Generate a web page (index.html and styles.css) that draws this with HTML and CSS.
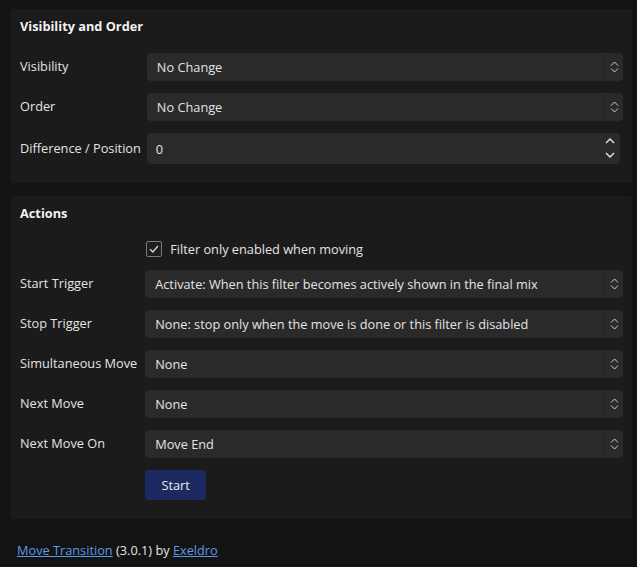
FILE: index.html
```html
<!DOCTYPE html>
<html>
<head>
<meta charset="utf-8">
<link rel="stylesheet" href="styles.css">
</head>
<body>
<section class="panel">
  <h2 class="panel-title">Visibility and Order</h2>
  <div class="form">
    <div class="label">Visibility</div>
    <div class="select"><span class="value">No Change</span><span class="arrows"><svg width="9" height="14" viewBox="0 0 9 14"><path d="M1 5.5 L4.5 2 L8 5.5 M1 8.5 L4.5 12 L8 8.5" fill="none" stroke="#cfcfcf" stroke-width="1"/></svg></span></div>
    <div class="label">Order</div>
    <div class="select"><span class="value">No Change</span><span class="arrows"><svg width="9" height="14" viewBox="0 0 9 14"><path d="M1 5.5 L4.5 2 L8 5.5 M1 8.5 L4.5 12 L8 8.5" fill="none" stroke="#cfcfcf" stroke-width="1"/></svg></span></div>
    <div class="label">Difference / Position</div>
    <div class="spin"><span class="value">0</span><span class="spin-arrows"><svg width="10" height="24" viewBox="0 0 10 24"><path d="M1 6 L5 2 L9 6 M1 16 L5 20 L9 16" fill="none" stroke="#e6e6e6" stroke-width="1.4"/></svg></span></div>
  </div>
</section>

<section class="panel">
  <h2 class="panel-title">Actions</h2>
  <div class="form form-actions">
    <div class="label"></div>
    <label class="check"><span class="box"><svg width="12" height="12" viewBox="0 0 12 12"><path d="M2 6.2 L4.8 9 L10 3" fill="none" stroke="#d8d8d8" stroke-width="1.3"/></svg></span>Filter only enabled when moving</label>
    <div class="label">Start Trigger</div>
    <div class="select"><span class="value">Activate: When this filter becomes actively shown in the final mix</span><span class="arrows"><svg width="9" height="14" viewBox="0 0 9 14"><path d="M1 5.5 L4.5 2 L8 5.5 M1 8.5 L4.5 12 L8 8.5" fill="none" stroke="#cfcfcf" stroke-width="1"/></svg></span></div>
    <div class="label">Stop Trigger</div>
    <div class="select"><span class="value">None: stop only when the move is done or this filter is disabled</span><span class="arrows"><svg width="9" height="14" viewBox="0 0 9 14"><path d="M1 5.5 L4.5 2 L8 5.5 M1 8.5 L4.5 12 L8 8.5" fill="none" stroke="#cfcfcf" stroke-width="1"/></svg></span></div>
    <div class="label">Simultaneous Move</div>
    <div class="select"><span class="value">None</span><span class="arrows"><svg width="9" height="14" viewBox="0 0 9 14"><path d="M1 5.5 L4.5 2 L8 5.5 M1 8.5 L4.5 12 L8 8.5" fill="none" stroke="#cfcfcf" stroke-width="1"/></svg></span></div>
    <div class="label">Next Move</div>
    <div class="select"><span class="value">None</span><span class="arrows"><svg width="9" height="14" viewBox="0 0 9 14"><path d="M1 5.5 L4.5 2 L8 5.5 M1 8.5 L4.5 12 L8 8.5" fill="none" stroke="#cfcfcf" stroke-width="1"/></svg></span></div>
    <div class="label">Next Move On</div>
    <div class="select"><span class="value">Move End</span><span class="arrows"><svg width="9" height="14" viewBox="0 0 9 14"><path d="M1 5.5 L4.5 2 L8 5.5 M1 8.5 L4.5 12 L8 8.5" fill="none" stroke="#cfcfcf" stroke-width="1"/></svg></span></div>
    <div class="label"></div>
    <div><button class="btn">Start</button></div>
  </div>
</section>

<footer class="footer"><a href="#">Move Transition</a> (3.0.1) by <a href="#">Exeldro</a></footer>
</body>
</html>
```

FILE: styles.css
```css
html, body {
  background: #131313;
}
body {
  margin: 9px 5px 0 11px;
  font-family: "Open Sans", "Liberation Sans", sans-serif;
  font-size: 12.75px;
  color: #e4e4e4;
}
.panel {
  background: #1b1b1b;
  border-radius: 4px;
  padding: 8px 9px 19px 9px;
  margin-bottom: 13px;
}
.panel-title {
  margin: 0 0 18px 0;
  font-size: 12.75px;
  line-height: 18px;
  font-weight: 700;
  color: #f2f2f2;
}
.form {
  display: grid;
  grid-template-columns: auto 1fr;
  column-gap: 6px;
  row-gap: 12px;
  align-items: center;
}
.form-actions {
  column-gap: 8px;
}
.label {
  line-height: 18px;
  padding-bottom: 2px;
  white-space: nowrap;
}
.select {
  height: 28px;
  background: #2a2a2b;
  border-radius: 4px;
  display: flex;
  align-items: center;
  padding-left: 10px;
}
.select .value {
  flex: 1;
  white-space: nowrap;
  overflow: hidden;
}
.arrows {
  width: 18px;
  height: 26px;
  border-left: 1px solid #202020;
  display: flex;
  align-items: center;
  justify-content: center;
}
.arrows svg { display: block; }
.spin {
  height: 31px;
  margin-right: 3px;
  background: #2a2a2b;
  border-radius: 4px;
  display: flex;
  align-items: center;
  padding-left: 9px;
}
.spin .value { flex: 1; }
.spin-arrows {
  width: 20px;
  display: flex;
  align-items: center;
  justify-content: center;
}
.spin-arrows svg { display: block; }
.check {
  display: flex;
  align-items: center;
  height: 18px;
  padding-left: 1px;
}
.box {
  width: 14px;
  height: 14px;
  border: 1px solid #7a7a7a;
  border-radius: 2px;
  background: #1e1e1e;
  display: flex;
  align-items: center;
  justify-content: center;
  margin-right: 8px;
}
.box svg { display: block; }
.btn {
  font-family: inherit;
  font-size: 12.75px;
  color: #eaeaea;
  background: #1d2a62;
  border: none;
  border-radius: 4px;
  width: 61px;
  height: 30px;
  padding: 0;
  display: block;
}
.footer {
  margin-top: 22px;
  line-height: 18px;
  padding-left: 6px;
}
.footer a {
  color: #5a9ae6;
  text-decoration: underline;
}
```
